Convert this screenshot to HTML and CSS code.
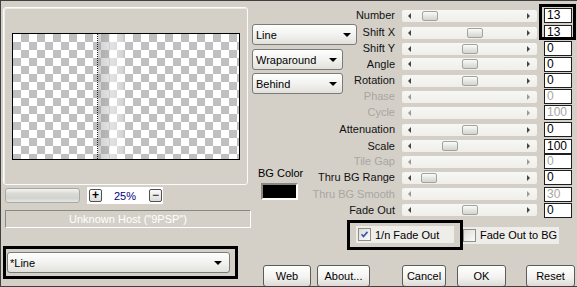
FILE: index.html
```html
<!DOCTYPE html>
<html lang="en">
  <head>
    <meta charset="UTF-8" />
    <title>Line</title>
    <link rel="stylesheet" href="styles.css">
  </head>
  <body>
    <div class="dialog">
      <div class="left">
        <div class="group">
          <div class="preview"><div class="stripe"></div></div>
        </div>
        <div class="zoom-row">
          <div class="zoom-bar"></div>
          <div class="zoom-ctrl">
            <span class="zbtn">+</span>
            <span class="zval">25%</span>
            <span class="zbtn minus">&minus;</span>
          </div>
        </div>
        <div class="status">Unknown Host ("9PSP")</div>
        <div class="mark preset">
          <div class="combo"><span>*Line</span><i class="arrow"></i></div>
        </div>
      </div>

      <div class="right">
        <div class="upper">
          <div class="mid">
            <div class="combo line"><span>Line</span><i class="arrow"></i></div>
            <div class="combo small"><span>Wraparound</span><i class="arrow"></i></div>
            <div class="combo small"><span>Behind</span><i class="arrow"></i></div>
            <div class="bg-color">
              <div>BG Color</div>
              <div class="swatch"></div>
            </div>
          </div>

          <div class="sliders">
            <div class="label">Number</div>
            <div class="track"><i class="thumb" style="left:20px"></i></div>
            <div class="box hl">13</div>

            <div class="label">Shift X</div>
            <div class="track"><i class="thumb" style="left:65px"></i></div>
            <div class="box">13</div>

            <div class="label">Shift Y</div>
            <div class="track"><i class="thumb" style="left:60px"></i></div>
            <div class="box">0</div>

            <div class="label">Angle</div>
            <div class="track"><i class="thumb" style="left:60px"></i></div>
            <div class="box">0</div>

            <div class="label">Rotation</div>
            <div class="track"><i class="thumb" style="left:60px"></i></div>
            <div class="box">0</div>

            <div class="label off">Phase</div>
            <div class="track off"></div>
            <div class="box off">0</div>

            <div class="label off">Cycle</div>
            <div class="track off"></div>
            <div class="box off">100</div>

            <div class="label">Attenuation</div>
            <div class="track"><i class="thumb" style="left:60px"></i></div>
            <div class="box">0</div>

            <div class="label">Scale</div>
            <div class="track"><i class="thumb" style="left:40px"></i></div>
            <div class="box">100</div>

            <div class="label off">Tile Gap</div>
            <div class="track off"></div>
            <div class="box off">0</div>

            <div class="label">Thru BG Range</div>
            <div class="track"><i class="thumb" style="left:19px"></i></div>
            <div class="box">0</div>

            <div class="label off">Thru BG Smooth</div>
            <div class="track off"></div>
            <div class="box off">30</div>

            <div class="label">Fade Out</div>
            <div class="track"><i class="thumb" style="left:60px"></i></div>
            <div class="box">0</div>
          </div>
        </div>

        <div class="checks">
          <div class="mark check-mark">
            <label class="check">
              <svg width="13" height="13" viewBox="0 0 13 13"><path d="M3 6.2 L5.3 8.8 L10 3.4" fill="none" stroke="#3a55b4" stroke-width="2"/></svg>
              1/n Fade Out
            </label>
          </div>
          <label class="check">
            <svg width="13" height="13" viewBox="0 0 13 13"></svg>
            Fade Out to BG
          </label>
        </div>

        <div class="buttons">
          <div class="btn web">Web</div>
          <div class="btn about">About...</div>
          <div class="btn cancel">Cancel</div>
          <div class="btn ok">OK</div>
          <div class="btn reset">Reset</div>
        </div>
      </div>
    </div>
  </body>
</html>
```

FILE: styles.css
```css
* {
  margin: 0;
  padding: 0;
  box-sizing: border-box;
}

body {
  background: #d4d0c8;
  font-family: "Liberation Sans", Arial, sans-serif;
  font-size: 11px;
  color: #000;
}

.dialog {
  width: 577px;
  height: 287px;
  display: flex;
  background: #d4d0c8;
  border-top: 1px solid #404040;
  border-left: 1px solid #404040;
  border-bottom: 1px solid #404040;
  overflow: hidden;
}

/* Left side: preview */
.left {
  width: 249px;
  flex: none;
  padding: 6px 0 0 2px;
  display: flex;
  flex-direction: column;
}

.group {
  width: 245px;
  height: 178px;
  border: 1px solid #fbfbfa;
  border-radius: 3px;
  box-shadow: inset 1px 1px 0 #ecebe6;
  padding: 25px 0 0 8px;
}

.preview {
  position: relative;
  width: 228px;
  height: 127px;
  border: 1px solid #000;
  background: conic-gradient(#c0c0c0 25%, #fff 0 50%, #c0c0c0 0 75%, #fff 0);
  background-size: 16px 16px;
}

.stripe {
  position: absolute;
  top: 0;
  bottom: 0;
  left: 84px;
  width: 28px;
  border-left: 1px dotted #222;
  background: linear-gradient(to right, rgba(150, 150, 150, 0.45), rgba(170, 170, 170, 0.35) 40%, rgba(255, 255, 255, 0.55) 45%, rgba(255, 255, 255, 0.35) 90%, rgba(255, 255, 255, 0));
}

.zoom-row {
  display: flex;
  align-items: center;
  height: 17px;
  margin: 2px 0 0 2px;
}

.zoom-bar {
  width: 75px;
  height: 15px;
  border: 1px solid #a8a8a4;
  border-radius: 3px;
  background: linear-gradient(#f4f4f2, #dadad6 35%, #d2d2ce 70%, #e6e6e2);
}

.zoom-ctrl {
  display: flex;
  align-items: center;
  width: 76px;
  height: 17px;
  margin-left: 7px;
  padding-left: 2px;
  background: #fff;
}

.zbtn {
  width: 13px;
  height: 13px;
  border: 1px solid #505050;
  border-radius: 2px;
  background: linear-gradient(#fafafa, #dedcd6);
  font-size: 12px;
  font-weight: bold;
  line-height: 10px;
  text-align: center;
}

.zbtn.minus {
  font-weight: normal;
  margin-left: 13px;
}

.zval {
  margin-left: 12px;
  color: #00007e;
  font-size: 11px;
}

.status {
  width: 246px;
  height: 18px;
  margin: 6px 0 0 2px;
  border: 1px solid;
  border-color: #8a8882 #fff #fff #8a8882;
  color: #fff;
  text-align: center;
  line-height: 16px;
}

.mark {
  border: 3px solid #000;
}

.preset {
  width: 235px;
  height: 33px;
  margin-top: 18px;
  padding: 3px 0 0 1px;
}

/* Combos */
.combo {
  display: flex;
  align-items: center;
  justify-content: space-between;
  height: 21px;
  padding: 0 5px 0 3px;
  border: 1px solid #7b7b78;
  border-radius: 3px;
  background: linear-gradient(#fefefe, #f2f2f0 50%, #e2e1dd);
  font-size: 11px;
}

.preset .combo {
  width: 223px;
  padding-left: 2px;
  padding-right: 7px;
}

.arrow {
  width: 0;
  height: 0;
  border-left: 4px solid transparent;
  border-right: 4px solid transparent;
  border-top: 4px solid #000;
}

/* Right side */
.right {
  flex: 1;
  display: flex;
  flex-direction: column;
}

.upper {
  display: flex;
  height: 217px;
}

.mid {
  width: 62px;
  flex: none;
  padding: 23px 0 0 2px;
}

.combo.line {
  width: 105px;
}

.combo.small {
  width: 91px;
  margin-top: 4px;
}

.combo.small + .combo.small {
  margin-top: 3px;
}

.bg-color {
  width: 42px;
  margin: 73px 0 0 6px;
  text-align: center;
  line-height: 13px;
  white-space: nowrap;
}

.swatch {
  width: 37px;
  height: 17px;
  margin: 3px auto 0;
  background: #000;
  border: 2px solid;
  border-color: #8a8882 #fff #fff #8a8882;
}

.sliders {
  display: grid;
  grid-template-columns: 83px 135px 28px;
  grid-template-rows: 17px 17px 15px 16px 17px 15px 17px 17px 16px 15px 17px 16px 16px;
  column-gap: 7px;
  align-items: center;
  padding-top: 6px;
}

.label {
  text-align: right;
  white-space: nowrap;
  line-height: 13px;
  color: #111;
}

.label.off,
.box.off {
  color: #a8a6a0;
}

.track {
  position: relative;
  height: 12px;
  border-radius: 2px;
  background: linear-gradient(#f7f7f5, #efeeea);
}

.track::before,
.track::after {
  content: "";
  position: absolute;
  top: 3px;
  width: 0;
  height: 0;
  border-top: 3px solid transparent;
  border-bottom: 3px solid transparent;
}

.track::before {
  left: 6px;
  border-right: 3px solid #444;
}

.track::after {
  right: 7px;
  border-left: 3px solid #444;
}

.track.off::before {
  border-right-color: #9a9a96;
}

.track.off::after {
  border-left-color: #9a9a96;
}

.thumb {
  position: absolute;
  top: 1px;
  width: 16px;
  height: 10px;
  border: 1px solid #a2a29e;
  border-radius: 2px;
  background: linear-gradient(#fbfbfa, #e6e6e3 50%, #d4d4d0);
}

.box {
  height: 15px;
  border: 1px solid #1e1e1e;
  background: #fff;
  padding-left: 2px;
  line-height: 13px;
  font-size: 12px;
}

/* highlight round the first two edit boxes */
.box.hl {
  position: relative;
}

.box.hl::after {
  content: "";
  position: absolute;
  top: -5px;
  left: -6px;
  right: -5px;
  bottom: -18px;
  border: 3px solid #000;
}

/* Check boxes */
.checks {
  display: flex;
  align-items: center;
  margin: 2px 0 0 97px;
}

.check-mark {
  width: 116px;
  height: 30px;
  padding: 3px 0 0 6px;
}

.check {
  display: flex;
  align-items: center;
  gap: 4px;
  height: 17px;
  padding-left: 2px;
  background: #eeede9;
}

.check-mark .check {
  width: 98px;
}

.checks > .check {
  width: 96px;
  padding-left: 0;
  margin-left: 0;
}

.check svg {
  width: 13px;
  height: 13px;
  border: 1px solid #8e8e8c;
  background: linear-gradient(135deg, #dcdbd5, #fbfbfa);
}

/* Buttons */
.buttons {
  display: flex;
  margin-top: 15px;
}

.btn {
  height: 22px;
  border: 1px solid #5c5c5a;
  border-radius: 3px;
  background: linear-gradient(#ffffff, #f3f3f1 55%, #dcdbd6);
  text-align: center;
  line-height: 20px;
}

.web { width: 48px; margin-left: 13px; }
.about { width: 53px; margin-left: 6px; }
.cancel { width: 44px; margin-left: 32px; }
.ok { width: 49px; margin-left: 11px; }
.reset { width: 49px; margin-left: 20px; }
```
